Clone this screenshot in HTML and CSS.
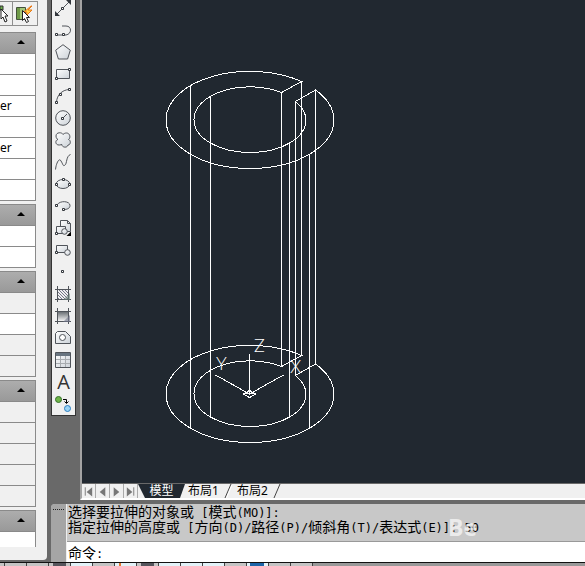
FILE: index.html
```html
<!DOCTYPE html>
<html lang="zh-CN">
<head>
<meta charset="utf-8">
<title>模型</title>
<link rel="stylesheet" href="styles.css">
</head>
<body>
<div class="app">
  <div class="workspace">
    <aside class="palette">
      <div class="palette-tools">
        <button class="pick" aria-label="选择对象"><svg width="12" height="20" viewBox="0 0 12 20"><path d="M0 2h3v4H0z" fill="#6fb04c" stroke="#333"/><path d="M1 5v10l2-2 2 5 2-1-2-5h3z" fill="#fff" stroke="#222"/></svg></button>
        <button class="quick" aria-label="快速选择"><svg width="22" height="20" viewBox="0 0 22 20"><path d="M3.500 3.500h9v12h-9z" fill="#a5c778" stroke="#44523a"/><path d="M4 4h3v11H4z" fill="#6e9a48"/><path d="M18 2l-7 6h3l-1 4 6-6h-4l4-4z" fill="#ffd24a" stroke="#e87818"/><path d="M9.500 6.500v10l2-2 2 4 2-1-2-4h3z" fill="#fff" stroke="#222"/></svg></button>
      </div>
      <section class="group">
        <button class="group-head" aria-label="折叠"><svg width="8" height="4" viewBox="0 0 8 4"><path d="M0 4l4-4 4 4z"/></svg></button>
        <div class="row"></div><div class="row"></div><div class="row">er</div><div class="row"></div><div class="row">er</div><div class="row"></div><div class="row"></div>
      </section>
      <section class="group">
        <button class="group-head" aria-label="折叠"><svg width="8" height="4" viewBox="0 0 8 4"><path d="M0 4l4-4 4 4z"/></svg></button>
        <div class="row"></div><div class="row"></div>
      </section>
      <section class="group">
        <button class="group-head" aria-label="折叠"><svg width="8" height="4" viewBox="0 0 8 4"><path d="M0 4l4-4 4 4z"/></svg></button>
        <div class="row locked"></div><div class="row"></div><div class="row locked"></div><div class="row locked"></div>
      </section>
      <section class="group">
        <button class="group-head" aria-label="折叠"><svg width="8" height="4" viewBox="0 0 8 4"><path d="M0 4l4-4 4 4z"/></svg></button>
        <div class="row locked"></div><div class="row locked"></div><div class="row locked"></div><div class="row locked"></div><div class="row locked"></div>
      </section>
      <section class="group cut">
        <button class="group-head" aria-label="折叠"><svg width="8" height="4" viewBox="0 0 8 4"><path d="M0 4l4-4 4 4z"/></svg></button>
        <div class="row"></div>
      </section>
    </aside>

    <main class="main">
      <div class="stage">
        <div class="toolbar" role="toolbar" aria-label="绘图">
          <svg class="defs" width="0" height="0"><defs>
            <linearGradient id="face" x1="0" y1="0" x2="1" y2="1"><stop offset="0" stop-color="#fff"/><stop offset="1" stop-color="#ccd2d8"/></linearGradient>
            <linearGradient id="fade" x1="0" y1="0" x2="0" y2="1"><stop offset="0" stop-color="#6c7176"/><stop offset="1" stop-color="#f4f4f4"/></linearGradient>
            <pattern id="hatch" width="3" height="3" patternUnits="userSpaceOnUse"><path d="M0 0l3 3" stroke="#778" stroke-width="1"/></pattern>
          </defs></svg>
          <button class="tool" aria-label="直线"><svg viewBox="0 0 16 16"><path d="M1 15L15 1"/><path class="solid" d="M0 16v-5l5 5zM16 0v5l-5-5z"/><path class="node" d="M6.500 7.500h2v2h-2z"/></svg></button>
          <button class="tool" aria-label="多段线"><svg viewBox="0 0 16 16"><path d="M1 13h10c6-1 6-9 0-9H7"/><path class="node" d="M.5 11.500h2v2h-2zM7.500 11.500h2v2h-2z"/></svg></button>
          <button class="tool" aria-label="正多边形"><svg viewBox="0 0 16 16"><path class="face" d="M8 .7l7.300 5.500L12.600 15H3.400L.7 6.200z"/></svg></button>
          <button class="tool" aria-label="矩形"><svg viewBox="0 0 16 16"><path class="face" d="M1.500 3.500h13v9h-13z"/><path class="node" d="M.5 11.500h2v2h-2zM13.500 2.500h2v2h-2z"/></svg></button>
          <button class="tool" aria-label="圆弧"><svg viewBox="0 0 16 16"><path d="M1.500 14C2 7 7 2 14 1.500"/><path class="node" d="M.5 13.500h2v2h-2zM4.500 5.500h2v2h-2zM13.500.5h2v2h-2z"/></svg></button>
          <button class="tool" aria-label="圆"><svg viewBox="0 0 16 16"><circle class="face" cx="8" cy="8" r="7.300"/><path d="M8 8l4-4"/><path class="node" d="M6.500 7.500h2v2h-2z"/></svg></button>
          <button class="tool" aria-label="修订云线"><svg viewBox="0 0 16 16"><path class="face" d="M8 2.500C7 0 1 0 1 4c0 2 1 3 2 3.500C0 8 0 13 4 13c1 0 2 0 2.500-1 .5 4 6 4 6.500 1 3 0 3-5 .5-5.500C16 6 15 1 11.500 1 10 1 9 1.500 8 2.500z"/></svg></button>
          <button class="tool" aria-label="样条曲线"><svg viewBox="0 0 16 16"><path d="M.5 15.500C1 10 4 3 6 7c2 3 2 6 4 4 2-1 1-9 5.500-10.500"/></svg></button>
          <button class="tool" aria-label="椭圆"><svg viewBox="0 0 16 16"><ellipse class="face" cx="8" cy="8" rx="6.800" ry="4.500"/><path class="node" d="M.5 7.500h2v2h-2zM13.500 7.500h2v2h-2zM7.500 2.500h2v2h-2z"/></svg></button>
          <button class="tool" aria-label="椭圆弧"><svg viewBox="0 0 16 16"><path class="face" stroke="none" d="M2 7C5 2 15 3 15 7.500c0 3-3 4-6 4z"/><path d="M2 7C5 2 15 3 15 7.500c0 3-3 4-6 4"/><path class="node" d="M.5 6.500h2v2h-2zM7.500 10.500h2v2h-2z"/></svg></button>
          <button class="tool" aria-label="插入块"><svg viewBox="0 0 16 16"><path class="face" d="M5.500 7V.5h7l3 3v8h-4"/><path d="M12.500.5v3h3"/><path class="face" d="M1.500 6.500h9v7h-9z"/><circle class="face" cx="9.500" cy="11.500" r="2.800"/><path class="node" d="M.5 12.500h2v2h-2z"/><path d="M16 11.500V16h-4.500z" fill="#000" stroke="none"/></svg></button>
          <button class="tool" aria-label="创建块"><svg viewBox="0 0 16 16"><path class="face" d="M1.500 3.500h11v7h-11z"/><circle class="face" cx="12.500" cy="10.500" r="2.800"/><path class="node" d="M.5 9.500h2v2h-2z"/></svg></button>
          <button class="tool" aria-label="点"><svg viewBox="0 0 16 16"><path class="node" d="M6.500 6.500h2v2h-2z"/></svg></button>
          <button class="tool" aria-label="图案填充"><svg viewBox="0 0 16 16"><path d="M3 4h10v9H3z" fill="url(#hatch)" stroke="none"/><path d="M2.500 0v16M13.500 0v16M0 3.500h16M0 13.500h16"/><path d="M8 14l7-7v7z" fill="#6d8078" stroke="none" opacity=".6"/></svg></button>
          <button class="tool" aria-label="渐变色"><svg viewBox="0 0 16 16"><path d="M3 4h10v9H3z" fill="url(#fade)" stroke="none"/><path d="M2.500 0v16M13.500 0v16M0 3.500h16M0 13.500h16"/><path d="M8 14l7-7v7z" fill="#70758a" stroke="none" opacity=".6"/></svg></button>
          <button class="tool" aria-label="面域"><svg viewBox="0 0 16 16"><path class="face" d="M.5 3.500l2-2h8l5 5v7H.5z"/><circle cx="7.500" cy="7.500" r="3" fill="#fff"/></svg></button>
          <button class="tool" aria-label="表格"><svg viewBox="0 0 16 16"><path class="face" d="M.5.5h15v15H.5z"/><path d="M1 1h14v3H1z" fill="#687480" stroke="none"/><path d="M1 7.500h14M1 11.500h14M5.500 4v11M10.500 4v11" stroke="#a8acb0"/></svg></button>
          <button class="tool letter" aria-label="多行文字">A</button>
          <button class="tool" aria-label="添加选定对象"><svg viewBox="0 0 16 16"><circle cx="3.500" cy="3.500" r="3" fill="#6fb548" stroke="#35702a"/><circle cx="12.500" cy="12.500" r="3" fill="#9bd4f5" stroke="#2d7fc0"/><path d="M8 3.500h3.500V7M9.500 5.500l2 2 2-2" stroke="#000"/></svg></button>
        </div>

        <div class="window">
          <div class="canvas">
            <svg class="drawing" viewBox="82 0 503 483" role="img" aria-label="三维线框">
              <g id="ring">
                <path d="M301.500 81.500A84 48.500 0 0 0 166 120A84 48.500 0 0 0 250 168.500A84 48.500 0 0 0 334 120A84 48.500 0 0 0 315.500 90L295.500 101.500A56 32.500 0 0 1 306 120A56 32.500 0 0 1 250 152.500A56 32.500 0 0 1 194 120A56 32.500 0 0 1 281.500 92.500Z"/>
              </g>
              <use href="#ring" y="274"/>
              <path d="M190.500 85.500v343M210.500 97v320M281.500 92.500v274M289.500 143v274M295.500 101.500v274M301.500 81.500v274M309.500 154v274M315.500 90.500v274"/>
              <path d="M249.500 354v40M215.500 375l34 19 34-19M243 394l6.500-3.500 6.500 3.500-6.500 3.500zM245 393h9"/>
              <text x="216" y="370">Y</text><text x="254" y="352">Z</text><text x="290" y="373">X</text>
            </svg>
          </div>
          <div class="tabs">
            <button class="nav" aria-label="第一个"><svg viewBox="0 0 14 13"><path d="M3.500 2v9"/><path class="tri" d="M11 2v10L5 7z"/></svg></button>
            <button class="nav" aria-label="上一个"><svg viewBox="0 0 14 13"><path class="tri" d="M10 2v10L4 7z"/></svg></button>
            <button class="nav" aria-label="下一个"><svg viewBox="0 0 14 13"><path class="tri" d="M4 2v10l6-5z"/></svg></button>
            <button class="nav" aria-label="最后一个"><svg viewBox="0 0 14 13"><path d="M10.500 2v9"/><path class="tri" d="M3 2v10l6-5z"/></svg></button>
            <button class="tab active">模型</button>
            <button class="tab">布局1</button>
            <svg class="slash" viewBox="0 0 8 14"><path d="M1 14L7 0"/><path class="edge" d="M2.500 14L8 1"/></svg>
            <button class="tab">布局2</button>
            <svg class="slash" viewBox="0 0 8 14"><path d="M1 14L7 0"/></svg>
          </div>
        </div>
      </div>

      <div class="command">
        <div class="grip"><span class="dots"></span></div>
        <div class="console">
          <div class="history">
            <p>选择要拉伸的对象或<span class="mono"> [</span>模式<span class="mono">(MO)]:</span></p>
            <p>指定拉伸的高度或<span class="mono"> [</span>方向<span class="mono">(D)/</span>路径<span class="mono">(P)/</span>倾斜角<span class="mono">(T)/</span>表达式<span class="mono">(E)]: 50</span></p>
            <span class="mark">Be</span>
          </div>
          <div class="prompt"><label for="cmd">命令<span class="mono">:</span></label><input id="cmd" type="text"></div>
        </div>
      </div>
    </main>
  </div>
  <footer class="status">
    <span class="cell first"></span><span class="cell"></span><span class="cell"></span><span class="cell dark"></span><span class="cell on"></span><span class="cell"></span><span class="cell on orange"></span><span class="cell dark"></span><span class="cell on"></span><span class="cell on"></span><span class="cell on"></span><span class="cell"></span><span class="cell on blue"></span><span class="cell"></span><span class="cell"></span>
  </footer>
</div>
</body>
</html>
```
FILE: styles.css
```css
* { box-sizing: border-box; }
body { margin: 0; background: #696969; font-family: "Noto Sans", "Noto Sans CJK SC", sans-serif; }
button { margin: 0; padding: 0; border: 0; background: none; font: inherit; color: inherit; }
svg { display: block; flex: none; }
p { margin: 0; }

.app { display: flex; flex-direction: column; height: 100vh; overflow: hidden; }
.workspace { display: flex; flex: 1; min-height: 0; }

/* Properties palette */
.palette {
  flex: none; width: 47px; margin-bottom: 2px;
  display: flex; flex-direction: column; gap: 3px;
  background: #f0f0f0; border-radius: 0 0 4px 0; overflow: hidden;
}
.palette-tools { flex: none; display: flex; width: 38px; height: 25px; margin: 1px 0 3px; border: 1px solid #8e8e8e; border-left: 0; }
.pick { width: 13px; border-right: 1px solid #8e8e8e; }
.quick { flex: 1; }
.group { flex: none; width: 36px; border: solid #8a8a8a; border-width: 1px 1px 0 0; }
.group-head {
  display: flex; align-items: center; width: 100%; height: 21px; padding: 0 0 2px 17px;
  background: linear-gradient(#adadad, #999); border-bottom: 1px solid #8a8a8a;
}
.row { height: 21px; background: #fff; border-bottom: 1px solid #8a8a8a; font-size: 12px; line-height: 20px; }
.row.locked { background: #f0f0f0; }
.cut .row { height: 15px; border-bottom: 0; }

.main { flex: 1; min-width: 0; margin-left: 4px; display: flex; flex-direction: column; }
.stage { flex: 1; min-height: 0; display: flex; align-items: flex-start; gap: 4px; margin-bottom: 4px; }

/* Draw toolbar, scrolled slightly under the window edge */
.toolbar { flex: none; width: 25px; margin-top: -3px; background: #f0f0f0; border: 1px solid #333; border-top: 0; }
.defs { position: absolute; }
.tool { display: flex; align-items: center; width: 23px; height: 22px; padding-left: 3px; }
.tool svg { width: 16px; height: 16px; fill: none; stroke: #50545a; }
.tool .face { fill: url(#face); }
.tool .node { fill: #fff; stroke: #33373d; }
.tool .solid { fill: #33373d; stroke: none; }
.tool.letter { justify-content: center; padding: 0; font-family: "Open Sans", sans-serif; font-size: 20px; line-height: 22px; font-weight: 500; color: #333; }

.window { flex: 1; min-width: 0; align-self: stretch; display: flex; flex-direction: column; border-left: 2px solid #a4a4a4; border-bottom: 2px solid #fff; }
.canvas { flex: 1; min-height: 0; overflow: hidden; background: #212830; }
.drawing { width: 503px; height: 483px; fill: none; stroke: #fff; shape-rendering: crispEdges; }
.drawing text { font: 300 18px Lato, sans-serif; fill: #fff; stroke: none; }

.tabs { display: flex; height: 15px; background: #f0f0f0; border-top: 1px solid #696969; font-size: 12px; line-height: 14px; color: #000; }
.nav { width: 14px; border-right: 1px solid #aaa; }
.nav svg { width: 13px; height: 13px; stroke: #777; }
.nav .tri { fill: #777; stroke: none; }
.tab { padding: 0 3px; white-space: nowrap; }
.tab.active { width: 47px; background: #212830; color: #fff; clip-path: polygon(0 0, 100% 0, 42px 100%, 7px 100%); }
.slash { width: 8px; height: 14px; margin: 0 2px; fill: none; stroke: #444; }
.slash .edge { stroke: #fff; }

/* Command line */
.command { flex: none; display: flex; height: 58px; background: #c8c8c8; border-radius: 4px 0 0 0; overflow: hidden; font: 14px/15px "Noto Sans CJK SC", sans-serif; color: #000; }
.grip { width: 16px; padding: 3px 2px; background: #a5a5a5; border-right: 1px solid #eee; }
.dots { display: block; height: 3px; background: repeating-linear-gradient(#a5a5a5 0 1px, transparent 1px 2px) 0 1px, repeating-linear-gradient(90deg, #222 0 1px, #a5a5a5 1px 2px); }
.console { flex: 1; min-width: 0; display: flex; flex-direction: column; }
.history { position: relative; height: 41px; padding: 0 1px; border-bottom: 1px solid #999; }
.history p { height: 15px; white-space: pre; }
.mono { font: 12px/15px "DejaVu Sans Mono", monospace; white-space: pre; }
.mark { position: absolute; left: 381px; top: 9px; font: bold 23px/28px "Open Sans", sans-serif; color: #fff; opacity: .65; }
.prompt { flex: 1; display: flex; align-items: center; padding: 3px 1px 0; background: #fff; }
.prompt input { flex: 1; min-width: 0; height: 15px; padding: 0; border: 0; outline: 0; font: inherit; }

.status { flex: none; display: flex; height: 4px; background: #999; border-top: 1px solid #111; }
.cell { width: 22px; background: #c4c4c4; border-right: 1px solid #444; }
.cell.first { width: 5px; }
.cell.on { background: #e2f2f8; }
.cell.dark { background: linear-gradient(90deg, #c4c4c4 4px, #55555c 4px 17px, #c4c4c4 17px); }
.cell.orange { background: linear-gradient(90deg, #e2f2f8 4px, #e87830 4px 6px, #e2f2f8 6px); }
.cell.blue { background: linear-gradient(90deg, #e2f2f8 3px, #1d65a8 3px 17px, #e2f2f8 17px); }
```
